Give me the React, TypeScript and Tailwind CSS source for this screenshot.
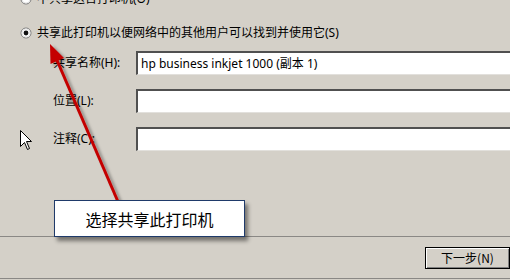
import React from "react";

function Radio({ checked }: { checked?: boolean }) {
  return (
    <svg width="12" height="12" viewBox="0 0 12 12" className="shrink-0">
      <circle cx="6" cy="6" r="5" fill="#ffffff" stroke="#7a7a7a" strokeWidth="1" />
      <circle cx="6" cy="6" r="4" fill="none" stroke="#e6e6e6" strokeWidth="1" />
      {checked && <circle cx="6" cy="6" r="2.4" fill="#111111" />}
    </svg>
  );
}

function Field({ label, value }: { label: string; value?: string }) {
  return (
    <div className="flex h-[24px] items-center">
      <div className="w-[83px] shrink-0">{label}</div>
      <div className="flex h-[24px] flex-1 items-center mr-[-20px] border-t-2 border-l-2 border-b border-t-[#505050] border-l-[#505050] border-b-[#e2e0dc] bg-white pl-[3px]">
        {value}
      </div>
    </div>
  );
}

export default function App() {
  return (
    <div className="relative h-[280px] w-[510px] overflow-hidden bg-[#d4d0c8] text-[12px] leading-[16px] text-black font-['Noto_Sans','Noto_Sans_CJK_SC',sans-serif]">
      <div className="flex flex-col">
        <div className="mt-[-9px] flex h-[16px] items-center gap-[5px] pl-[20px]">
          <Radio />
          <span>不共享这台打印机(O)</span>
        </div>
        <div className="mt-[18px] flex h-[16px] items-center gap-[5px] pl-[20px]">
          <Radio checked />
          <span>共享此打印机以便网络中的其他用户可以找到并使用它(S)</span>
        </div>
        <div className="mt-[10px] flex flex-col gap-[14px] pl-[53px]">
          <Field label="共享名称(H):" value="hp business inkjet 1000 (副本 1)" />
          <Field label="位置(L):" />
          <Field label="注释(C):" />
        </div>
        <div className="mt-[85px] h-px bg-[#8a8885]" />
        <div className="mt-[10px] flex justify-end">
          <div className="flex h-[22px] w-[85px] items-center justify-center border border-black bg-[#d4d0c8] shadow-[inset_1px_1px_0_#ffffff,inset_-1px_-1px_0_#808080] font-['Noto_Sans_CJK_SC',sans-serif] text-[12px]">
            下一步(N)
          </div>
        </div>
        <div className="mt-[9px] h-px bg-[#8a8885]" />
      </div>

      {/* arrow overlay */}
      <svg className="pointer-events-none absolute left-0 top-0" width="510" height="280" viewBox="0 0 510 280">
        <defs>
          <filter id="sh" x="-50%" y="-50%" width="200%" height="200%">
            <feDropShadow dx="3" dy="2" stdDeviation="1.6" floodColor="#000000" floodOpacity="0.35" />
          </filter>
        </defs>
        <g filter="url(#sh)">
          <line x1="119" y1="204" x2="56" y2="58" stroke="#c40000" strokeWidth="3" />
          <polygon points="50,44 64,58 50.5,64" fill="#c40000" />
        </g>
      </svg>

      {/* callout */}
      <div className="absolute left-[54px] top-[200px] flex h-[37px] w-[191px] items-center justify-center border border-[#1f3a6a] bg-white text-[16px] leading-[20px] shadow-[3px_4px_4px_rgba(0,0,0,0.45)] font-['Noto_Sans_CJK_SC',sans-serif]">
        选择共享此打印机
      </div>

      {/* mouse cursor */}
      <svg className="pointer-events-none absolute left-[20px] top-[130px]" width="13" height="21" viewBox="0 0 13 21">
        <path d="M0.5,0.5 L0.5,16.5 L4.5,12.5 L7.5,19.5 L9.5,18.5 L6.5,11.5 L11.5,11.5 Z" fill="#ffffff" stroke="#000000" strokeWidth="1" strokeLinejoin="miter" />
      </svg>
    </div>
  );
}
